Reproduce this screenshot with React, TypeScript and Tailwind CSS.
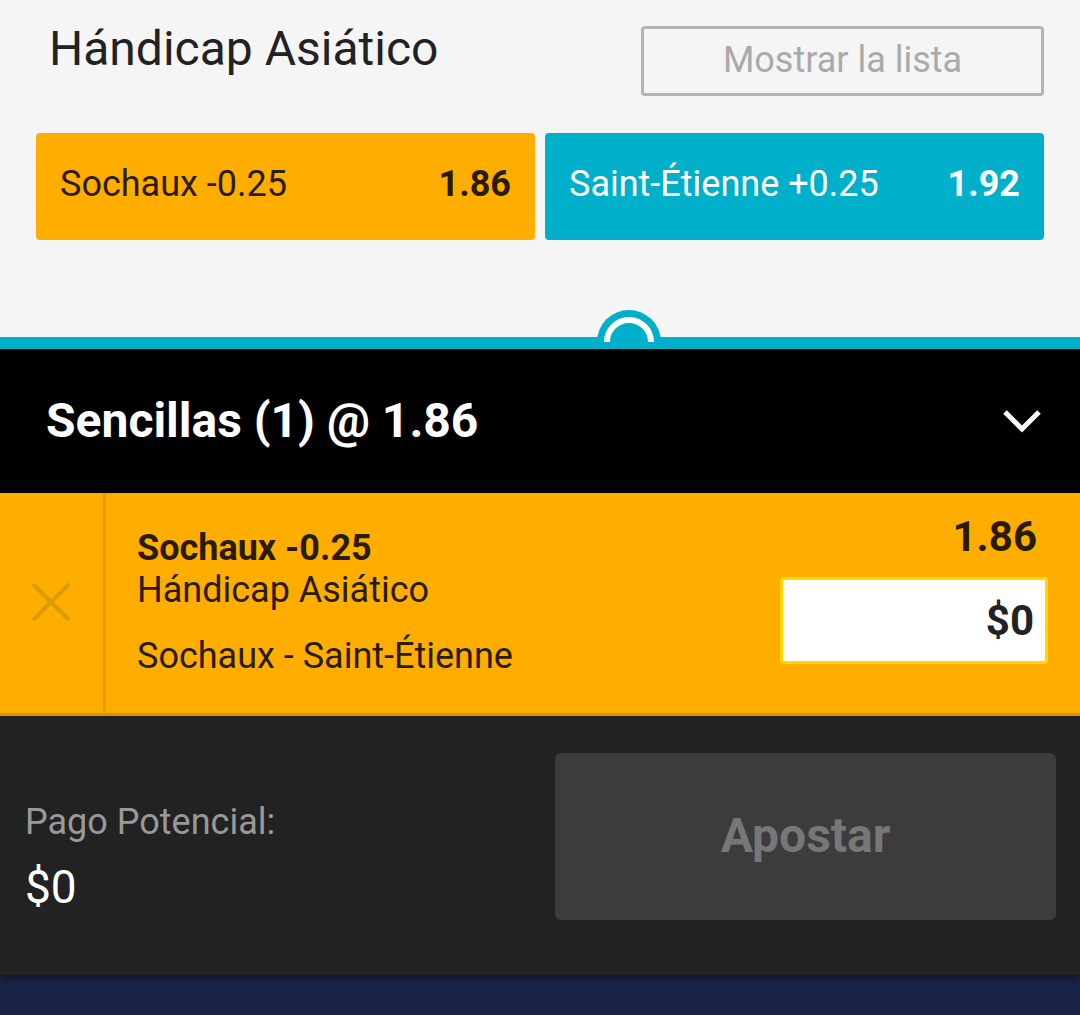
const odds = [
  { label: 'Sochaux -0.25', price: '1.86', tone: 'bg-[#ffae00] text-[#2a1c00]' },
  { label: 'Saint-Étienne +0.25', price: '1.92', tone: 'bg-[#00afc9] text-white' },
]

function MarketPanel() {
  return (
    <div className="bg-[#f5f5f5] px-[36px] pt-[21px] pb-[97px]">
      <div className="flex items-start justify-between">
        <h2 className="pl-[13px] text-[48px] leading-[56px] text-[#222]">Hándicap Asiático</h2>
        <button className="mt-[5px] h-[70px] w-[403px] rounded-[4px] border-[3px] border-[#b4b4b4] pb-[2px] text-[36px] text-[#aaa]">
          Mostrar la lista
        </button>
      </div>
      <div className="mt-[37px] grid grid-cols-2 gap-[10px]">
        {odds.map((o) => (
          <div
            key={o.label}
            className={`flex h-[107px] items-center justify-between rounded-[4px] pb-[6px] pl-[24px] pr-[24px] ${o.tone}`}
          >
            <span className="text-[36px]">{o.label}</span>
            <span className="text-[36px] font-bold">{o.price}</span>
          </div>
        ))}
      </div>
    </div>
  )
}

// cyan drawer edge with the little pull tab
function SlipHandle() {
  return (
    <div className="relative h-[12px] bg-[#00afc9]">
      <svg className="absolute left-[597px] top-[-27px]" width="64" height="32" viewBox="0 0 64 32">
        <path d="M0 32 A32 32 0 0 1 64 32 Z" fill="#00afc9" />
        <path d="M10 32 A22 22 0 0 1 54 32" fill="none" stroke="#fff" strokeWidth="6" />
      </svg>
    </div>
  )
}

function BetRow() {
  return (
    <div className="flex h-[223px] border-b-[3px] border-[#e09a00] bg-[#ffae00] text-[#2a1c00]">
      <div className="flex w-[106px] items-center justify-center border-r-[3px] border-[#e0a000]">
        <svg width="40" height="40" viewBox="0 0 40 40" className="mr-[2px] mt-[-2px]">
          <path d="M2 2 L38 38 M38 2 L2 38" stroke="#d99c00" strokeWidth="4" />
        </svg>
      </div>
      <div className="flex flex-1 justify-between pl-[31px] pr-[32px]">
        <div className="pt-[34px]">
          <div className="text-[36px] font-bold leading-[42px]">Sochaux -0.25</div>
          <div className="text-[36px] leading-[42px]">Hándicap Asiático</div>
          <div className="mt-[24px] text-[36px] leading-[42px]">Sochaux - Saint-Étienne</div>
        </div>
        <div className="flex flex-col items-end pt-[20px]">
          <div className="pr-[11px] text-[42px] font-bold leading-[48px]">1.86</div>
          <div className="mt-[16px] flex h-[87px] w-[268px] items-center justify-end rounded-[4px] border-[3px] border-[#ffd800] bg-white pr-[11px] text-[42px] font-bold text-[#222]">
            $0
          </div>
        </div>
      </div>
    </div>
  )
}

export default function App() {
  return (
    <div className="h-[1015px] w-[1080px] overflow-hidden bg-[#1a2448] font-['Roboto',sans-serif]">
      <MarketPanel />
      <SlipHandle />
      <div className="flex h-[144px] items-center justify-between bg-black pl-[46px] pr-[38px] text-white">
        <span className="text-[48px] font-bold">Sencillas (1) @ 1.86</span>
        <svg width="40" height="26" viewBox="0 0 40 26">
          <polyline points="3,4 20,21 37,4" fill="none" stroke="#fff" strokeWidth="5" />
        </svg>
      </div>
      <BetRow />
      <div className="flex h-[259px] items-start justify-between bg-[#222] pl-[25px] pr-[24px] pt-[37px] shadow-[0_4px_8px_rgba(0,0,0,0.4)]">
        <div className="pt-[47px]">
          <div className="text-[36px] leading-[44px] text-[#999]">Pago Potencial:</div>
          <div className="mt-[15px] text-[46px] leading-[56px] text-white">$0</div>
        </div>
        <button className="h-[167px] w-[501px] rounded-[6px] bg-[#3c3c3c] pb-[2px] text-[48px] font-bold text-[#777]">
          Apostar
        </button>
      </div>
    </div>
  )
}
